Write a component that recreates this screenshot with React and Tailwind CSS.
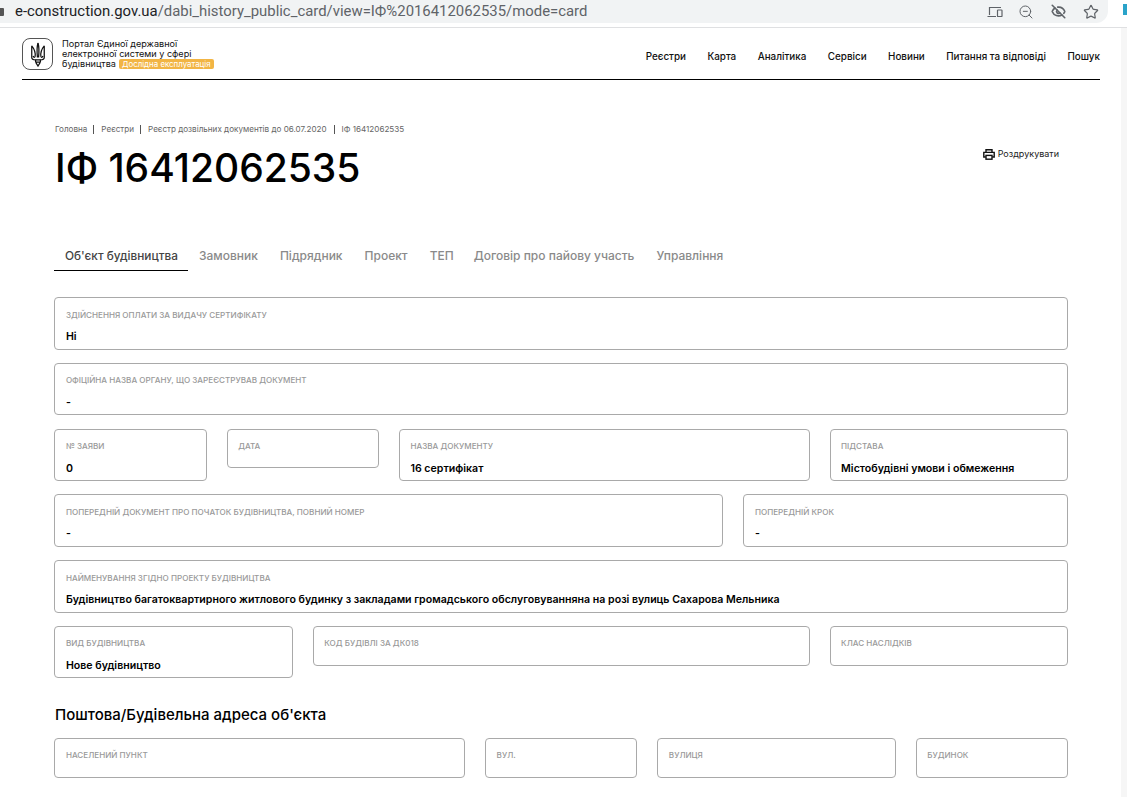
import React from 'react';
import { ZoomOut, EyeOff, Star } from 'lucide-react';

const navItems = ['Реєстри', 'Карта', 'Аналітика', 'Сервіси', 'Новини', 'Питання та відповіді', 'Пошук'];
const tabs = ['Замовник', 'Підрядник', 'Проект', 'ТЕП', 'Договір про пайову участь', 'Управління'];

function Trident() {
  return (
    <svg width="16" height="25" viewBox="0 0 16 26" fill="none" stroke="#111" strokeWidth="1.3">
      <path d="M8 1 C6.8 5 6.8 10 7.4 16 M8 1 C9.2 5 9.2 10 8.6 16" />
      <path d="M1.5 4 L1.5 16 C1.5 18 4 18.5 5.5 18.5 L5.5 21 M1.5 4 C4 7 5.5 11 5 15 C4.5 16.5 3.5 16 3 14.5" />
      <path d="M14.5 4 L14.5 16 C14.5 18 12 18.5 10.5 18.5 L10.5 21 M14.5 4 C12 7 10.5 11 11 15 C11.5 16.5 12.5 16 13 14.5" />
      <path d="M5.5 18.5 H10.5 M5.5 21 L8 25 L10.5 21 M5.5 21 H10.5" />
    </svg>
  );
}

function PrinterIcon() {
  return (
    <svg width="12" height="11" viewBox="0 0 12 11" fill="none" stroke="#111" strokeWidth="1.4">
      <path d="M3 3 V0.8 H9 V3" />
      <path d="M2.8 8 H0.8 V3.4 H11.2 V8 H9.2" />
      <rect x="3" y="6.4" width="6" height="3.8" />
    </svg>
  );
}

function Field({ label, value, span }) {
  return (
    <div className={`${span} border border-[#a9a9a9] rounded-[4px] pl-[10.5px] pr-2 pt-[10.5px] pb-[3.5px] bg-white`}>
      <div className="text-[8.1px] leading-[12px] text-[#999] font-medium uppercase whitespace-nowrap">{label}</div>
      {value && <div className="mt-[8.5px] text-[10.6px] leading-[16px] font-semibold text-black whitespace-nowrap">{value}</div>}
    </div>
  );
}

function App() {
  return (
    <div className="w-[1127px] h-[797px] overflow-hidden bg-white font-['Inter',sans-serif]">
      <div className="h-[28px] flex items-start bg-white border-b border-[#dfe0e2]">
        <div className="w-[1108px] h-[23px] rounded-br-[12px] bg-[#f1f3f4] flex items-center">
          <div className="w-[4px] h-[8px] bg-[#555] rounded-r-[1px]"></div>
          <div className="ml-[11px] text-[14.9px] font-['Roboto',sans-serif] text-[#5f6368] whitespace-nowrap">
            <span className="text-[#202124]">e-construction.gov.ua</span>/dabi_history_public_card/view=IФ%2016412062535/mode=card
          </div>
          <div className="ml-auto flex items-center pr-[9px] text-[#5f6368]">
            <svg width="16" height="12" viewBox="0 0 16 12" fill="none" stroke="#5f6368" strokeWidth="1.2">
              <path d="M2.5 9 V1.5 H14 M0.5 10.5 H9" />
              <rect x="10.5" y="4" width="4.5" height="6.5" rx="0.6" />
            </svg>
            <ZoomOut className="ml-[15px]" size={16} strokeWidth={1.5} />
            <EyeOff className="ml-[17px]" size={15} strokeWidth={2.6} />
            <Star className="ml-[17px]" size={16} strokeWidth={1.8} />
          </div>
        </div>
        <div className="ml-auto w-[4px] h-[11px] mt-[4px] bg-[#2aa3c9]"></div>
      </div>

      <div className="flex h-[769px]">
        <div className="w-[1121px]">
          <header className="ml-[22px] mr-[21px] h-[52px] border-b border-black flex items-start pt-[10px]">
            <div className="w-[31px] h-[32px] border border-[#555] rounded-[8px] flex items-center justify-center shrink-0">
              <Trident />
            </div>
            <div className="ml-[9px] text-[9.1px] leading-[10px] mt-[1px] text-[#111] w-[170px]">
              <div>Портал Єдиної державної</div>
              <div className="whitespace-nowrap">електронної системи у сфері</div>
              <div className="flex items-center whitespace-nowrap">
                будівництва
                <span className="ml-[3px] bg-[#f2b544] text-white text-[7.9px] leading-[10px] px-[3px] rounded-[2px] whitespace-nowrap">Дослідна експлуатація</span>
              </div>
            </div>
            <nav className="ml-auto flex gap-[21.4px] mt-[11px] text-[9.9px] leading-[14px] font-medium text-[#111] whitespace-nowrap">
              {navItems.map(item => <span key={item}>{item}</span>)}
            </nav>
          </header>

          <main className="pl-[55px] pr-[53px]">
            <div className="flex items-center mt-[43px] text-[8.1px] leading-[12px] text-[#666] whitespace-nowrap">
              <span>Головна</span>
              <span className="w-px h-[9px] bg-[#555] ml-[6px] mr-[7px]"></span>
              <span>Реєстри</span>
              <span className="w-px h-[9px] bg-[#555] ml-[6px] mr-[7px]"></span>
              <span>Реєстр дозвільних документів до 06.07.2020</span>
              <span className="w-px h-[9px] bg-[#555] ml-[7px] mr-[7px]"></span>
              <span>ІФ 16412062535</span>
            </div>

            <div className="flex justify-between items-start">
              <h1 className="mt-[11px] text-[39px] leading-[44px] font-medium text-black">ІФ 16412062535</h1>
              <div className="flex items-center gap-[3px] mt-[12px] mr-[9px] text-[9px] leading-[14px] text-[#222]">
                <PrinterIcon />
                Роздрукувати
              </div>
            </div>

            <div className="flex -ml-px mt-[56px] text-[12px] leading-[16px] font-medium text-[#8a8a8a] whitespace-nowrap">
              <div className="pl-[11px] pr-[10px] h-[25px] pt-[2px] text-[11.8px] text-[#444] border-b border-black">Об'єкт будівництва</div>
              <div className="flex gap-[22px] ml-[11px] pt-[2px]">
                {tabs.map(tab => <span key={tab} className={tab === 'ТЕП' ? '-mr-[2px]' : ''}>{tab}</span>)}
              </div>
            </div>

            <div className="grid grid-cols-12 gap-x-5 gap-y-[13.3px] -ml-[0.6px] mt-[26px] items-start">
              <Field span="col-span-12" label="Здійснення оплати за видачу сертифікату" value="Ні" />
              <Field span="col-span-12" label="Офіційна назва органу, що зареєстрував документ" value="-" />
              <Field span="col-span-2" label="№ заяви" value="0" />
              <Field span="col-span-2 h-[39px]" label="Дата" />
              <Field span="col-span-5" label="Назва документу" value="16 сертифікат" />
              <Field span="col-span-3" label="Підстава" value="Містобудівні умови і обмеження" />
              <Field span="col-span-8" label="Попередній документ про початок будівництва, повний номер" value="-" />
              <Field span="col-span-4" label="Попередній крок" value="-" />
              <Field span="col-span-12" label="Найменування згідно проекту будівництва" value="Будівництво багатоквартирного житлового будинку з закладами громадського обслуговуванняна на розі вулиць Сахарова Мельника" />
              <Field span="col-span-3" label="Вид будівництва" value="Нове будівництво" />
              <Field span="col-span-6 h-[40px]" label="Код будівлі за ДК018" />
              <Field span="col-span-3 h-[40px]" label="Клас наслідків" />
            </div>

            <h2 className="mt-[26.5px] text-[15px] leading-[20px] font-medium text-black">Поштова/Будівельна адреса об'єкта</h2>

            <div className="grid grid-cols-12 gap-x-5 -ml-[0.6px] mt-[13px] items-start">
              <Field span="col-span-5 h-[40px]" label="Населений пункт" />
              <Field span="col-span-2 h-[40px]" label="Вул." />
              <Field span="col-span-3 h-[40px]" label="Вулиця" />
              <Field span="col-span-2 h-[40px]" label="Будинок" />
            </div>
          </main>
        </div>
        <div className="w-[6px] bg-[#f6f6f6]"></div>
      </div>
    </div>
  );
}

export default App;
